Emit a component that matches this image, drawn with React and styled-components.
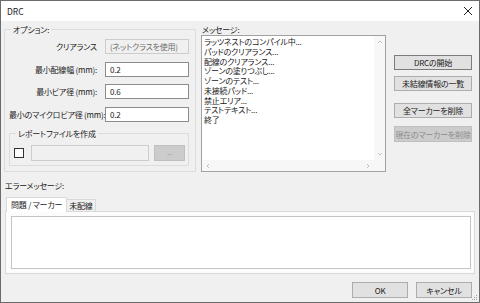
import React from 'react'
import styled, { createGlobalStyle } from 'styled-components'

const GlobalStyle = createGlobalStyle`
  html, body {
    margin: 0;
    padding: 0;
    background: #ffffff;
  }
  * {
    box-sizing: border-box;
  }
`;

const Window = styled.div`
    position: relative;
    width: 480px;
    height: 303px;
    border: 1px solid #6b6b6b;
    display: flex;
    flex-direction: column;
    font-family: "Noto Sans CJK JP", "Noto Sans", sans-serif;
    font-feature-settings: "palt";
    font-size: 8px;
    letter-spacing: -0.2px;
    color: #1a1a1a;
    overflow: hidden;
`;

const TitleBar = styled.div`
    height: 20px;
    flex: none;
    background: #fff;
    display: flex;
    align-items: center;
    justify-content: space-between;
    padding: 0 6px 0 6px;
`;

const Title = styled.span`
    font-size: 8.5px;
    line-height: 11px;
    letter-spacing: 0;
`;

const Body = styled.div`
    flex: 1;
    background: #f0f0f0;
    padding: 3px 4px 0 3px;
    display: flex;
    flex-direction: column;
`;

const TopRow = styled.div`
    display: flex;
    height: 148px;
`;

const Group = styled.fieldset`
    margin: 0;
    border: 1px solid #dcdcdc;
    min-width: 0;
    width: ${p => p.$width || 'auto'};
    height: ${p => p.$height || 'auto'};
    padding: ${p => p.$pad};
    margin-top: ${p => p.$mt || '0px'};
`;

const Legend = styled.legend`
    padding: 0 2px;
    margin-left: 2px;
    line-height: 11px;
`;

const FieldGrid = styled.div`
    display: grid;
    grid-template-columns: minmax(0, 1fr) 84px;
    grid-auto-rows: 15px;
    column-gap: 8px;
    row-gap: 7.5px;
    align-items: center;
`;

const Label = styled.span`
    text-align: right;
    white-space: nowrap;
    line-height: 15px;
`;

const Field = styled.div`
    height: ${p => p.$h || '15px'};
    border: 1px solid ${p => p.$disabled ? '#cccccc' : '#8c8c8c'};
    background: ${p => p.$disabled ? '#f0f0f0' : '#fff'};
    color: ${p => p.$disabled ? '#6d6d6d' : '#1a1a1a'};
    padding-left: 4px;
    line-height: 13px;
    white-space: nowrap;
    overflow: hidden;
    width: ${p => p.$width || 'auto'};
`;

const ReportRow = styled.div`
    display: flex;
    align-items: center;
    height: 16px;
`;

const CheckBox = styled.div`
    width: 10px;
    height: 10px;
    border: 1px solid #333;
    background: #fff;
    margin-right: 7px;
`;

const Browse = styled.div`
    width: 31px;
    height: 16px;
    margin-left: 5px;
    background: #cccccc;
    border: 1px solid #bfbfbf;
    color: #9a9a9a;
    text-align: center;
    line-height: 12px;
    font-size: 7px;
`;

const MessagesCol = styled.div`
    margin-left: 5px;
    width: 185px;
    display: flex;
    flex-direction: column;
`;

const ColLabel = styled.div`
    line-height: 11px;
    height: 11px;
    padding-left: 1px;
`;

const ListBox = styled.div`
    flex: 1;
    border: 1px solid #a2a2a2;
    background: #fff;
    display: grid;
    grid-template-columns: 1fr 11px;
    grid-template-rows: 1fr 11px;
`;

const ListItems = styled.div`
    padding: 1px 0 0 2px;
    line-height: 9.75px;
    white-space: nowrap;
    overflow: hidden;
`;

const ScrollBar = styled.div`
    background: #f7f7f7;
    display: flex;
    flex-direction: ${p => p.$vertical ? 'column' : 'row'};
    justify-content: space-between;
    align-items: center;
    padding: ${p => p.$vertical ? '3px 0' : '0 3px'};
`;

const Corner = styled.div`
    background: #f7f7f7;
`;

const ButtonCol = styled.div`
    margin-left: 8px;
    width: 78px;
    display: flex;
    flex-direction: column;
    padding-top: 31px;
`;

const Button = styled.div`
    height: ${p => p.$h || '15px'};
    margin-top: ${p => p.$mt || '0px'};
    width: ${p => p.$width || 'auto'};
    background: ${p => p.$disabled ? '#cccccc' : '#e1e1e1'};
    border: 1px solid ${p => p.$default ? '#7c7c7c' : p.$disabled ? '#bfbfbf' : '#adadad'};
    color: ${p => p.$disabled ? '#8a8a8a' : '#1a1a1a'};
    display: flex;
    align-items: center;
    justify-content: center;
    white-space: nowrap;
`;

const ErrorLabel = styled.div`
    margin-top: 8px;
    line-height: 11px;
    padding-left: 1px;
`;

const Tabs = styled.div`
    margin-top: 5px;
    display: flex;
    align-items: flex-end;
    padding-left: 2px;
    height: 15px;
`;

const Tab = styled.div`
    height: ${p => p.$active ? '15px' : '12px'};
    padding: 0 ${p => p.$active ? '4px' : '2px'};
    background: ${p => p.$active ? '#fff' : '#f0f0f0'};
    border: 1px solid #d9d9d9;
    border-bottom: none;
    ${p => !p.$active && 'border-left: none;'}
    line-height: ${p => p.$active ? '13px' : '12px'};
    white-space: nowrap;
    margin-bottom: ${p => p.$active ? '-1px' : '0'};
    position: relative;
    z-index: ${p => p.$active ? 1 : 0};
`;

const TabPanel = styled.div`
    margin-left: 1px;
    height: 63px;
    border: 1px solid #d9d9d9;
    background: #fcfcfc;
    padding: 4px 3px 4px 5px;
    display: flex;
`;

const TextArea = styled.div`
    flex: 1;
    border: 1px solid #c4c4c4;
    background: #fff;
`;

const Footer = styled.div`
    margin-top: 8px;
    display: flex;
    justify-content: flex-end;
    gap: 8px;
    padding-right: 3px;
`;

const Grip = styled.svg`
    position: absolute;
    right: 1px;
    bottom: 1px;
`;

const Chevron = ({ dir }) => {
  const paths = {
    up: 'M1 4 L3 2 L5 4',
    down: 'M1 2 L3 4 L5 2',
    left: 'M4 1 L2 3 L4 5',
    right: 'M2 1 L4 3 L2 5',
  }
  return (
    <svg width="6" height="6" viewBox="0 0 6 6">
      <path d={paths[dir]} fill="none" stroke="#c2c2c2" strokeWidth="1" />
    </svg>
  )
}

const messages = [
  'ラッツネストのコンパイル中...',
  'パッドのクリアランス...',
  '配線のクリアランス...',
  'ゾーンの塗りつぶし...',
  'ゾーンのテスト...',
  '未接続パッド...',
  '禁止エリア...',
  'テストテキスト...',
  '終了',
]

const App = () => {
  return (
    <Window>
      <GlobalStyle />
      <TitleBar>
        <Title>DRC</Title>
        <svg width="10" height="10" viewBox="0 0 10 10">
          <path d="M1 1 L9 9 M9 1 L1 9" stroke="#222" strokeWidth="1" />
        </svg>
      </TitleBar>
      <Body>
        <TopRow>
          <Group $width="192px" $height="148px" $pad="4px 6px 6px 4px">
            <Legend>オプション:</Legend>
            <FieldGrid>
              <Label>クリアランス</Label>
              <Field $disabled>(ネットクラスを使用)</Field>
              <Label>最小配線幅 (mm):</Label>
              <Field>0.2</Field>
              <Label>最小ビア径 (mm):</Label>
              <Field>0.6</Field>
              <Label>最小のマイクロビア径 (mm):</Label>
              <Field>0.2</Field>
            </FieldGrid>
            <Group $mt="6px" $pad="6px 3px 4px 4px">
              <Legend>レポートファイルを作成</Legend>
              <ReportRow>
                <CheckBox />
                <Field $disabled $width="119px" $h="16px" />
                <Browse>...</Browse>
              </ReportRow>
            </Group>
          </Group>

          <MessagesCol>
            <ColLabel>メッセージ:</ColLabel>
            <ListBox>
              <ListItems>
                {messages.map(m => <div key={m}>{m}</div>)}
              </ListItems>
              <ScrollBar $vertical>
                <Chevron dir="up" />
                <Chevron dir="down" />
              </ScrollBar>
              <ScrollBar>
                <Chevron dir="left" />
                <Chevron dir="right" />
              </ScrollBar>
              <Corner />
            </ListBox>
          </MessagesCol>

          <ButtonCol>
            <Button $default>DRCの開始</Button>
            <Button $mt="6px">未結線情報の一覧</Button>
            <Button $mt="12px">全マーカーを削除</Button>
            <Button $mt="8px" $h="16px" $disabled>現在のマーカーを削除</Button>
          </ButtonCol>
        </TopRow>

        <ErrorLabel>エラーメッセージ:</ErrorLabel>
        <Tabs>
          <Tab $active>問題 / マーカー</Tab>
          <Tab>未配線</Tab>
        </Tabs>
        <TabPanel>
          <TextArea />
        </TabPanel>

        <Footer>
          <Button $width="56px" $h="16px">OK</Button>
          <Button $width="56px" $h="16px">キャンセル</Button>
        </Footer>
      </Body>
      <Grip width="6" height="6" viewBox="0 0 6 6">
        <rect x="4" y="0" width="1" height="1" fill="#a0a0a0" />
        <rect x="2" y="2" width="1" height="1" fill="#a0a0a0" />
        <rect x="4" y="2" width="1" height="1" fill="#a0a0a0" />
        <rect x="0" y="4" width="1" height="1" fill="#a0a0a0" />
        <rect x="2" y="4" width="1" height="1" fill="#a0a0a0" />
        <rect x="4" y="4" width="1" height="1" fill="#a0a0a0" />
      </Grip>
    </Window>
  )
}

export default App
